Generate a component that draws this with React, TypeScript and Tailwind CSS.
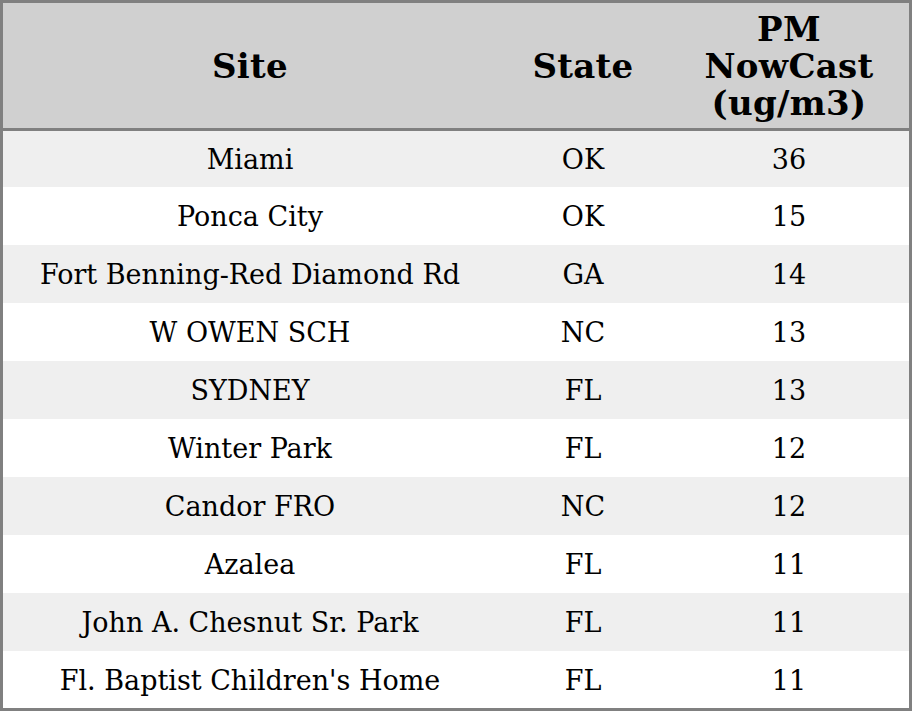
import React from "react";

const rows: [string, string, string][] = [
  ["Miami", "OK", "36"],
  ["Ponca City", "OK", "15"],
  ["Fort Benning-Red Diamond Rd", "GA", "14"],
  ["W OWEN SCH", "NC", "13"],
  ["SYDNEY", "FL", "13"],
  ["Winter Park", "FL", "12"],
  ["Candor FRO", "NC", "12"],
  ["Azalea", "FL", "11"],
  ["John A. Chesnut Sr. Park", "FL", "11"],
  ["Fl. Baptist Children's Home", "FL", "11"],
];

export default function App() {
  return (
    <div className="w-[912px] h-[711px] bg-white" style={{ fontFamily: '"DejaVu Serif", serif' }}>
      <div className="w-[912px] h-[711px] border-[3px] border-[#808080] flex flex-col text-black">
        <div className="flex h-[128px] shrink-0 bg-[#d0d0d0] border-b-[3px] border-[#808080] font-bold text-[34px] leading-[37px] tracking-[0.3px] text-center">
          <div className="w-[494px] flex items-center justify-center pt-[2px]">Site</div>
          <div className="w-[172px] flex items-center justify-center pt-[2px]">State</div>
          <div className="w-[240px] flex items-center justify-center pt-[2px]">PM<br />NowCast<br />(ug/m3)</div>
        </div>
        <div className="flex-1 flex flex-col">
          {rows.map((r, i) => (
            <div
              key={i}
              className={`flex items-center pt-[3px] text-[27px] text-center ${i === 0 ? "h-[56px]" : i === rows.length - 1 ? "flex-1" : "h-[58px]"} ${i % 2 === 0 ? "bg-[#efefef]" : "bg-white"}`}
            >
              <div className="w-[494px]">{r[0]}</div>
              <div className="w-[172px]">{r[1]}</div>
              <div className="w-[240px]">{r[2]}</div>
            </div>
          ))}
        </div>
      </div>
    </div>
  );
}
